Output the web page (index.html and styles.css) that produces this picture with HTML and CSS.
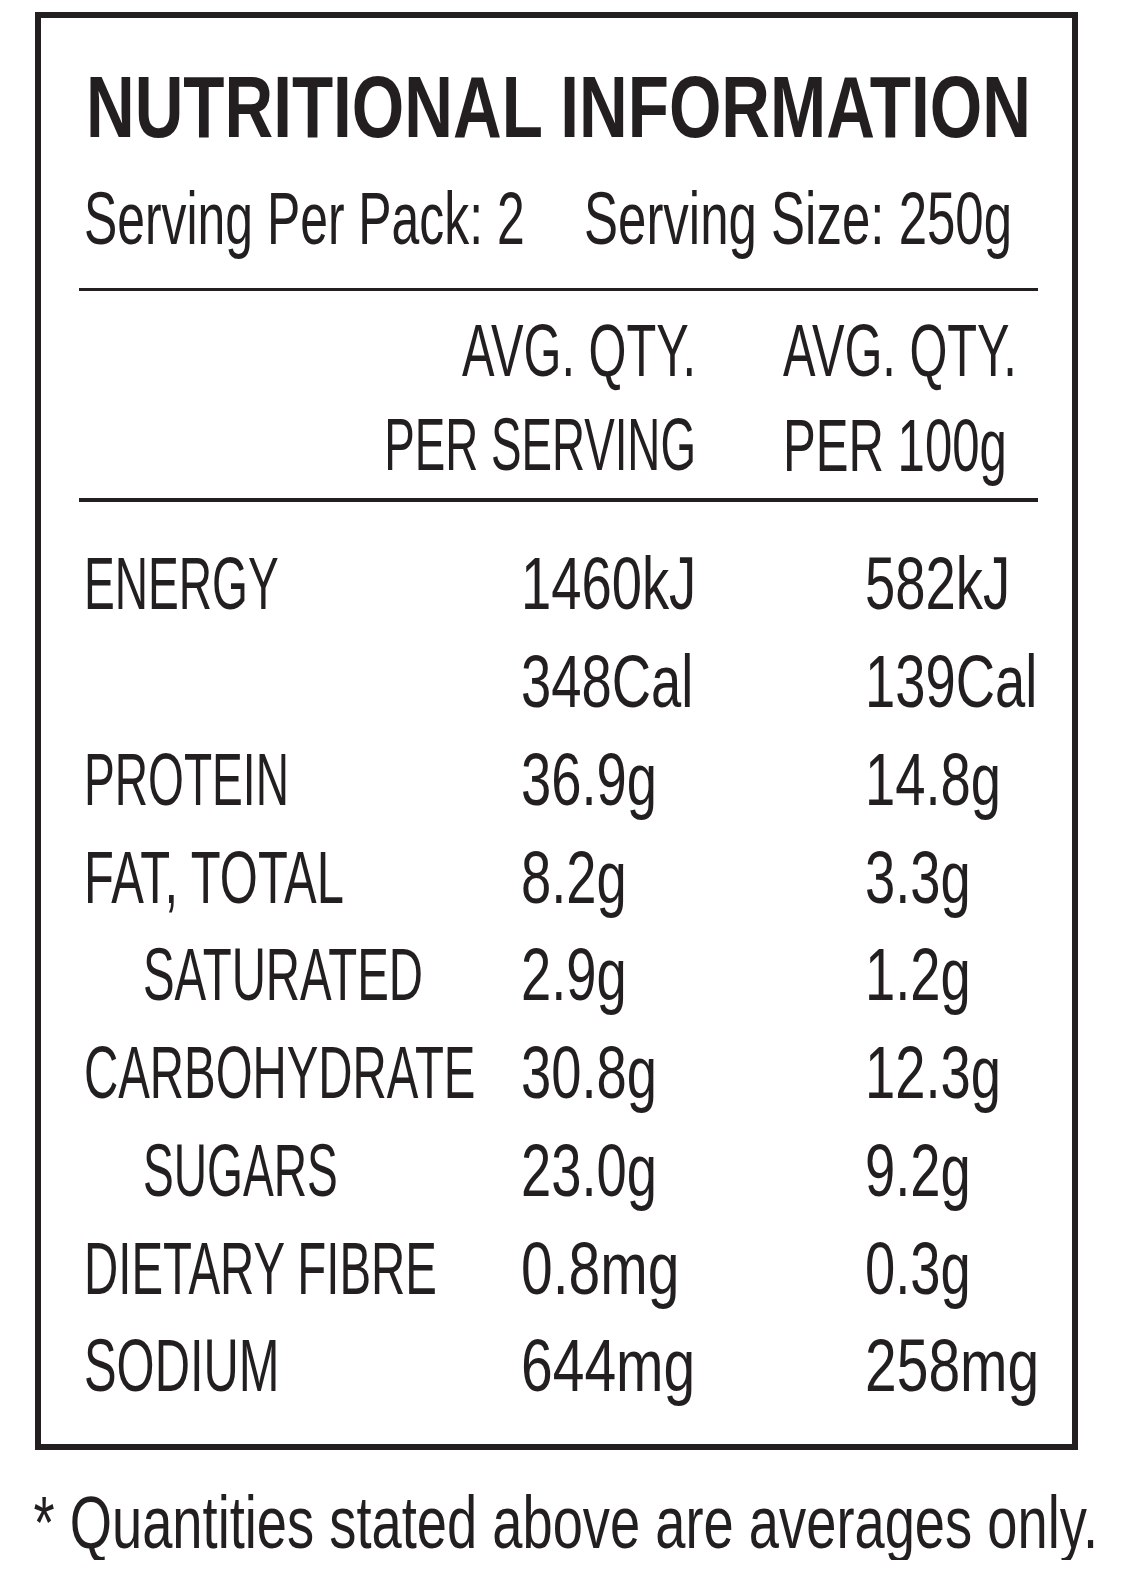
FILE: index.html
```html
<!DOCTYPE html>
<html lang="en">
<head>
<meta charset="utf-8">
<title>Nutritional Information</title>
<link rel="stylesheet" href="styles.css">
</head>
<body>
<section class="panel">
  <h1 class="title"><span class="sx sx-title">NUTRITIONAL INFORMATION</span></h1>
  <div class="serving">
    <div class="cell"><span class="sx sx-serv">Serving Per Pack: 2</span></div>
    <div class="cell"><span class="sx sx-serv2">Serving Size: 250g</span></div>
  </div>
  <div class="rule rule-top"></div>
  <div class="colhead">
    <div class="cell right"><span class="sx sx-avg">AVG. QTY.</span></div>
    <div class="cell"></div>
    <div class="cell"><span class="sx sx-avg">AVG. QTY.</span></div>
    <div class="cell right"><span class="sx sx-per">PER SERVING</span></div>
    <div class="cell"></div>
    <div class="cell"><span class="sx sx-per100">PER 100g</span></div>
  </div>
  <div class="rule rule-bottom"></div>
  <div class="facts">
    <div class="cell"><span class="sx lbl-a">ENERGY</span></div>
    <div class="cell"><span class="sx sx-num">1460kJ</span></div>
    <div class="cell"><span class="sx sx-num">582kJ</span></div>

    <div class="cell"></div>
    <div class="cell"><span class="sx sx-num">348Cal</span></div>
    <div class="cell"><span class="sx sx-num">139Cal</span></div>

    <div class="cell"><span class="sx lbl-a">PROTEIN</span></div>
    <div class="cell"><span class="sx sx-num">36.9g</span></div>
    <div class="cell"><span class="sx sx-num">14.8g</span></div>

    <div class="cell"><span class="sx lbl-c">FAT, TOTAL</span></div>
    <div class="cell"><span class="sx sx-num">8.2g</span></div>
    <div class="cell"><span class="sx sx-num">3.3g</span></div>

    <div class="cell indent"><span class="sx lbl-b">SATURATED</span></div>
    <div class="cell"><span class="sx sx-num">2.9g</span></div>
    <div class="cell"><span class="sx sx-num">1.2g</span></div>

    <div class="cell"><span class="sx lbl-b">CARBOHYDRATE</span></div>
    <div class="cell"><span class="sx sx-num">30.8g</span></div>
    <div class="cell"><span class="sx sx-num">12.3g</span></div>

    <div class="cell indent"><span class="sx lbl-a">SUGARS</span></div>
    <div class="cell"><span class="sx sx-num">23.0g</span></div>
    <div class="cell"><span class="sx sx-num">9.2g</span></div>

    <div class="cell"><span class="sx lbl-b">DIETARY FIBRE</span></div>
    <div class="cell"><span class="sx sx-mg">0.8mg</span></div>
    <div class="cell"><span class="sx sx-num">0.3g</span></div>

    <div class="cell"><span class="sx lbl-c">SODIUM</span></div>
    <div class="cell"><span class="sx sx-mg">644mg</span></div>
    <div class="cell"><span class="sx sx-mg">258mg</span></div>
  </div>
</section>
<p class="note"><span class="sx sx-note">* Quantities stated above are averages only.</span></p>
</body>
</html>
```

FILE: styles.css
```css
html, body {
  margin: 0;
  padding: 0;
  background: #ffffff;
}

body {
  color: #231f20;
  font-family: "Liberation Sans", Arial, sans-serif;
  font-size: 75px;
  width: 1124px;
  overflow: hidden;
}

.panel {
  box-sizing: border-box;
  margin: 12px 0 0 35px;
  width: 1043px;
  height: 1438px;
  border: 6px solid #231f20;
  padding: 45.4px 34px 0 38px;
  overflow: hidden;
}

.cell {
  white-space: nowrap;
  min-width: 0;
}

.right {
  text-align: right;
}

/* Condensed text: the glyphs are set at a smaller size (so the width
   matches a condensed face) and stretched back up vertically around
   the baseline. */
.sx {
  --fs: 75px;
  --s: 0.65;
  display: inline-block;
  white-space: nowrap;
  line-height: 0;
  font-size: calc(var(--fs) * var(--s));
  transform: scaleY(calc(1 / var(--s)));
  transform-origin: 0 calc(0.3465 * var(--fs) * var(--s));
}

.title {
  margin: 0;
  padding-left: 7px;
  font-size: 87px;
  line-height: 87px;
  font-weight: 700;
  white-space: nowrap;
}

.sx-title { --fs: 87px; --s: 0.775; }

.serving {
  margin-top: 31.1px;
  padding-left: 5px;
  display: grid;
  grid-template-columns: 500px minmax(0, 1fr);
  line-height: 75px;
}

.sx-serv { --s: 0.665; }
.sx-serv2 { --s: 0.68; }

.rule {
  height: 3.5px;
  background: #231f20;
}

.rule-top { margin-top: 31.5px; }

.colhead {
  margin-top: 11.5px;
  display: grid;
  grid-template-columns: 617px 87px minmax(0, 1fr);
  grid-auto-rows: 95px;
  line-height: 95px;
}

.sx-avg { --s: 0.65; }
.sx-per { --s: 0.61; }
.sx-per100 { --s: 0.655; }

.rule-bottom { margin-top: 5.5px; }

.facts {
  margin-top: 33.5px;
  padding-left: 5px;
  display: grid;
  grid-template-columns: 437px 344px minmax(0, 1fr);
  grid-auto-rows: 97.75px;
  line-height: 97.75px;
}

.indent { padding-left: 59px; }

.lbl-a { --s: 0.615; }
.lbl-b { --s: 0.632; }
.lbl-c { --s: 0.652; }
.sx-num { --s: 0.725; }
.sx-mg { --s: 0.76; }

.note {
  margin: 34.5px 0 0 0;
  padding-left: 33.5px;
  line-height: 75px;
  white-space: nowrap;
}

.sx-note { --s: 0.724; }
```
